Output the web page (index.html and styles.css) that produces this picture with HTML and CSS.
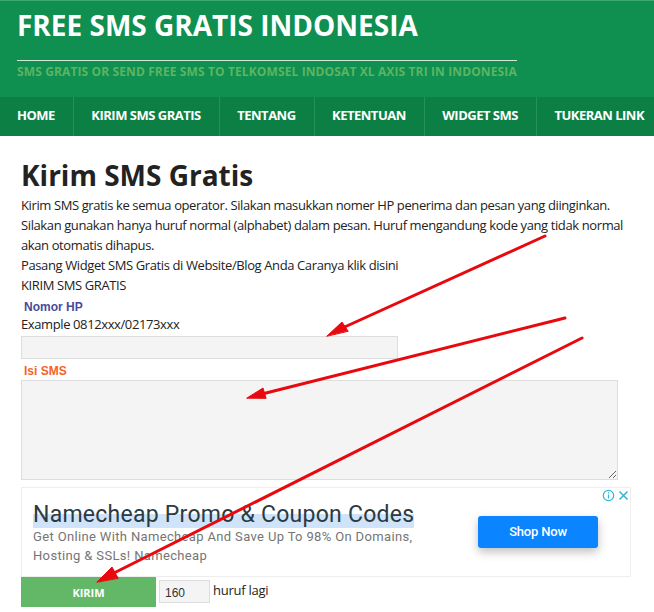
FILE: index.html
```html
<!DOCTYPE html>
<html>
<head>
    <meta charset="utf-8">
    <title>Free SMS Gratis Indonesia</title>
    <link rel="stylesheet" href="styles.css">
</head>
<body>
    <header class="site-header">
        <h1 class="site-title">FREE SMS GRATIS INDONESIA</h1>
        <p class="site-desc">SMS GRATIS OR SEND FREE SMS TO TELKOMSEL INDOSAT XL AXIS TRI IN INDONESIA</p>
    </header>
    <nav class="menu">
        <a class="menu-item">HOME</a>
        <a class="menu-item">KIRIM SMS GRATIS</a>
        <a class="menu-item">TENTANG</a>
        <a class="menu-item">KETENTUAN</a>
        <a class="menu-item">WIDGET SMS</a>
        <a class="menu-item">TUKERAN LINK</a>
    </nav>
    <main class="content">
        <h2 class="page-title">Kirim SMS Gratis</h2>
        <p class="text">Kirim SMS gratis ke semua operator. Silakan masukkan nomer HP penerima dan pesan yang diinginkan. Silakan gunakan hanya huruf normal (alphabet) dalam pesan. Huruf mengandung kode yang tidak normal akan otomatis dihapus.</p>
        <p class="text">Pasang Widget SMS Gratis di Website/Blog Anda Caranya klik disini</p>
        <p class="text">KIRIM SMS GRATIS</p>
        <div class="label label-blue">Nomor HP</div>
        <p class="text text-tight">Example 0812xxx/02173xxx</p>
        <input class="field field-phone" type="text">
        <div class="label label-orange">Isi SMS</div>
        <textarea class="field field-message"></textarea>
        <div class="ad">
            <div class="ad-badge">
                <svg width="13" height="13" viewBox="0 0 13 13" fill="none" stroke="#35b5d6" stroke-width="1.2">
                    <circle cx="6.5" cy="6.5" r="5.2"/>
                    <path d="M6.5 5.6v4M6.5 3.2v1.3"/>
                </svg>
                <svg width="11" height="11" viewBox="0 0 11 11" fill="none" stroke="#35b5d6" stroke-width="1.6">
                    <path d="M1.5 1.5l8 8M9.5 1.5l-8 8"/>
                </svg>
            </div>
            <div class="ad-copy">
                <div class="ad-title"><span class="ad-mark">Namecheap Promo &amp; Coupon Codes</span></div>
                <div class="ad-text">Get Online With Namecheap And Save Up To 98% On Domains, Hosting &amp; SSLs! Namecheap</div>
            </div>
            <a class="ad-button">Shop Now</a>
        </div>
        <div class="send-row">
            <button class="send-btn">KIRIM</button>
            <input class="counter" type="text" value="160">
            <span class="counter-label">huruf lagi</span>
        </div>
    </main>
    <!-- red arrows drawn over the page -->
    <svg class="arrows" width="654" height="612" viewBox="0 0 654 612">
        <g stroke="#e8090f" stroke-width="3" fill="#e8090f" stroke-linecap="round">
            <path d="M545 236L338 330"/>
            <path d="M327 336L342 322L348 331Z" stroke-width="1"/>
            <path d="M565 318L262 394"/>
            <path d="M247 398L263 388L266 398Z" stroke-width="1"/>
            <path d="M582 338L112 574"/>
            <path d="M97 582L112 567L118 578Z" stroke-width="1"/>
        </g>
    </svg>
</body>
</html>
```

FILE: styles.css
```css
* {
    box-sizing: border-box;
}
html, body {
    height: 612px;
    overflow: hidden;
}
body {
    margin: 0;
    position: relative;
    background-color: #fff;
    color: #222;
    font-family: "Open Sans", "Noto Sans", sans-serif;
}
.site-header {
    height: 97px;
    padding: 8px 0 0 17px;
    background-color: #0f8f50;
    border-top: 1px solid #3fa873;
}
.site-title {
    width: 500px;
    margin: 0;
    height: 52px;
    padding-bottom: 10px;
    border-bottom: 1px solid #cfe9da;
    color: #fff;
    font-size: 28px;
    font-weight: 700;
    line-height: 32px;
    white-space: nowrap;
}
.site-desc {
    margin: 3px 0 0;
    color: #5cb562;
    font-size: 12px;
    font-weight: 700;
    letter-spacing: 0.12px;
    line-height: 16px;
    white-space: nowrap;
}
.menu {
    display: flex;
    height: 39px;
    background-color: #0c7f45;
    overflow: hidden;
}
.menu-item {
    flex: none;
    padding: 0 18.5px 0 17px;
    border-right: 1px solid #25905a;
    color: #fff;
    font-size: 13px;
    font-weight: 700;
    letter-spacing: -0.5px;
    line-height: 37px;
    white-space: nowrap;
}
.content {
    padding: 21px 0 0 21px;
}
.page-title {
    margin: 0 0 2px;
    color: #222;
    font-size: 28px;
    font-weight: 700;
    line-height: 36px;
}
.text {
    width: 612px;
    margin: 0;
    font-size: 13px;
    letter-spacing: -0.39px;
    line-height: 20px;
}
.text-tight {
    line-height: 18px;
}
.label {
    padding: 5px 0 0 3px;
    font-family: "Liberation Sans", sans-serif;
    font-size: 12px;
    font-weight: 700;
    line-height: 15px;
}
.label-blue {
    color: #4a4a9c;
}
.label-orange {
    color: #f4631f;
}
.field {
    display: block;
    margin: 0;
    background-color: #f4f4f4;
    border: 1px solid #ddd;
    border-radius: 0;
    outline: none;
}
.field-phone {
    width: 377px;
    height: 23px;
    margin-top: 3px;
}
.field-message {
    width: 597px;
    height: 100px;
    margin-top: 1px;
}
.ad {
    position: relative;
    display: flex;
    align-items: flex-start;
    justify-content: space-between;
    width: 610px;
    height: 90px;
    margin-top: 7px;
    padding: 13px 32px 0 11px;
    background-color: #fff;
    border: 1px solid #eee;
}
.ad-badge {
    position: absolute;
    top: 1px;
    right: 1px;
    display: flex;
    align-items: center;
    gap: 3px;
}
.ad-copy {
    width: 392px;
}
.ad-title {
    color: #2c3a42;
    font-family: "Roboto", sans-serif;
    font-size: 23px;
    letter-spacing: 0.25px;
    line-height: 28px;
    white-space: nowrap;
}
.ad-mark {
    background: linear-gradient(to bottom, transparent 50%, #cfe4fb 50%);
    padding-bottom: 0;
}
.ad-text {
    margin-top: -2px;
    color: #757575;
    font-family: "Roboto", sans-serif;
    font-size: 13px;
    letter-spacing: 0.35px;
    line-height: 19px;
}
.ad-button {
    flex: none;
    width: 120px;
    height: 32px;
    margin-top: 15px;
    background-color: #0a84ff;
    border-radius: 3px;
    box-shadow: 0 4px 10px rgba(0, 0, 0, 0.25);
    color: #fff;
    font-family: "Roboto", sans-serif;
    font-size: 13px;
    font-weight: 500;
    letter-spacing: -0.2px;
    line-height: 32px;
    text-align: center;
}
.send-row {
    display: flex;
    align-items: flex-start;
}
.send-btn {
    width: 135px;
    height: 30px;
    background-color: #63b868;
    border: 0;
    color: #fff;
    font-family: "Open Sans", sans-serif;
    font-size: 11px;
    font-weight: 700;
    padding: 0;
}
.counter {
    width: 51px;
    height: 23px;
    margin: 3px 0 0 3px;
    padding: 2px 5px 0;
    background-color: #f4f4f4;
    border: 1px solid #ddd;
    color: #333;
    font-family: "Liberation Sans", sans-serif;
    font-size: 12px;
    outline: none;
}
.counter-label {
    margin-left: 3px;
    font-size: 13px;
    letter-spacing: -0.25px;
    line-height: 27px;
}
.arrows {
    position: absolute;
    top: 0;
    left: 0;
    pointer-events: none;
}
```
